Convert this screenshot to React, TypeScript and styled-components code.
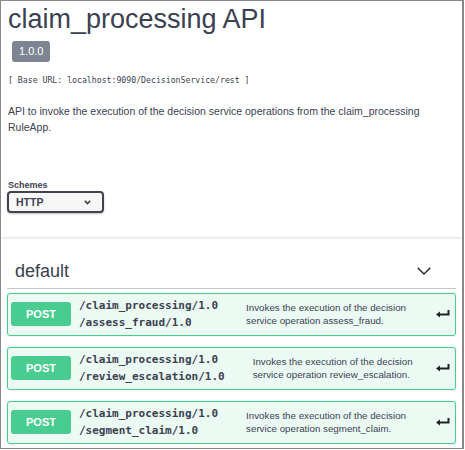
import React from "react";
import styled, { createGlobalStyle } from "styled-components";

const Global = createGlobalStyle`
  html, body { margin: 0; padding: 0; background: #fff; }
  body { font-family: "Liberation Sans", Arial, sans-serif; color: #3b4151; }
`;

const Frame = styled.div`
  width: 464px;
  height: 449px;
  box-sizing: border-box;
  border: 1px solid #888;
  border-right-width: 2px;
  overflow: hidden;
  display: flex;
  flex-direction: column;
`;

const Info = styled.div`
  padding: 0 7px;
`;

const Title = styled.h1`
  margin: 0;
  font-size: 27px;
  font-weight: 400;
  line-height: 36px;
  color: #3b4151;
`;

const Version = styled.span`
  display: inline-block;
  margin: 4px 0 0 4px;
  padding: 0 7px;
  height: 21px;
  line-height: 21px;
  background: #7d8492;
  color: #fff;
  font-size: 11px;
  border-radius: 3px;
`;

const BaseUrl = styled.div`
  margin-top: 12px;
  font-family: "DejaVu Sans Mono", monospace;
  font-size: 8.2px;
  line-height: 12px;
`;

const Description = styled.p`
  margin: 17px 0 0;
  font-size: 10.5px;
  line-height: 16px;
`;

const SchemeContainer = styled.div`
  margin-top: 45px;
  padding: 0 6px 24px;
  box-shadow: 0 1px 2px 0 rgba(0, 0, 0, 0.15);
`;

const Label = styled.div`
  font-size: 9px;
  font-weight: 700;
  line-height: 10px;
  padding-left: 1px;
`;

const Select = styled.div`
  margin-top: 1px;
  width: 97px;
  height: 22px;
  box-sizing: border-box;
  border: 2px solid #41444e;
  border-radius: 4px;
  background: #f7f7f7;
  display: flex;
  align-items: center;
  justify-content: space-between;
  padding: 0 11px 0 7px;
  font-size: 10.5px;
  font-weight: 700;
  box-shadow: 0 1px 2px 0 rgba(0, 0, 0, 0.25);
`;

const Section = styled.div`
  padding: 0 6px;
  margin-top: 17px;
`;

const TagHeader = styled.div`
  display: flex;
  align-items: center;
  justify-content: space-between;
  height: 34px;
  padding: 0 25px 0 8px;
  border-bottom: 1px solid rgba(59, 65, 81, 0.3);
  font-size: 18px;
  margin-bottom: 4px;
`;

const Op = styled.div`
  display: flex;
  align-items: center;
  border: 1px solid #49cc90;
  background: rgba(73, 204, 144, 0.1);
  border-radius: 3px;
  padding: 3.25px 5px 3.25px 3px;
  margin-bottom: 11.5px;
  box-shadow: 0 0 2px rgba(0, 0, 0, 0.19);
`;

const Method = styled.span`
  flex: none;
  width: 60px;
  height: 24px;
  line-height: 24px;
  text-align: center;
  background: #49cc90;
  color: #fff;
  font-size: 11px;
  font-weight: 700;
  border-radius: 3px;
`;

const Path = styled.span`
  flex: none;
  padding: 0 8px;
  font-family: "DejaVu Sans Mono", monospace;
  font-weight: 700;
  font-size: 11px;
  line-height: 17px;
  color: #3b4151;
`;

const OpDesc = styled.span`
  flex: none;
  width: 170px;
  padding-left: 20px;
  font-size: 9.75px;
  line-height: 13.5px;
  color: #3b4151;
`;

const Arrow = styled.span`
  margin-left: auto;
  display: flex;
`;

const Chevron = styled.svg`
  display: block;
`;

const EnterIcon = () => (
  <svg width="14" height="8" viewBox="0 0 14 8">
    <path d="M12.5 0 V4.5 H2" stroke="#222" strokeWidth="2" fill="none" />
    <path d="M0 4.5 L4 1.5 V7.5 Z" fill="#222" />
  </svg>
);

const operations = [
  { path2: "/assess_fraud/1.0", op: "assess_fraud" },
  { path2: "/review_escalation/1.0", op: "review_escalation" },
  { path2: "/segment_claim/1.0", op: "segment_claim" },
];

export default function App() {
  return (
    <>
      <Global />
      <Frame>
        <Info>
          <Title>claim_processing API</Title>
          <Version>1.0.0</Version>
          <BaseUrl>[ Base URL: localhost:9090/DecisionService/rest ]</BaseUrl>
          <Description>
            API to invoke the execution of the decision service operations from the claim_processing
            RuleApp.
          </Description>
        </Info>
        <SchemeContainer>
          <Label>Schemes</Label>
          <Select>
            <span>HTTP</span>
            <Chevron width="7" height="5" viewBox="0 0 7 5">
              <path d="M0.8 0.8 L3.5 3.6 L6.2 0.8" stroke="#3b4151" strokeWidth="1.6" fill="none" />
            </Chevron>
          </Select>
        </SchemeContainer>
        <Section>
          <TagHeader>
            <span>default</span>
            <Chevron width="14" height="8" viewBox="0 0 14 8">
              <path d="M0.7 0.7 L7 7 L13.3 0.7" stroke="#222" strokeWidth="1.3" fill="none" />
            </Chevron>
          </TagHeader>
          {operations.map((o) => (
            <Op key={o.op}>
              <Method>POST</Method>
              <Path>
                /claim_processing/1.0
                <br />
                {o.path2}
              </Path>
              <OpDesc>{`Invokes the execution of the decision service operation ${o.op}.`}</OpDesc>
              <Arrow>
                <EnterIcon />
              </Arrow>
            </Op>
          ))}
        </Section>
      </Frame>
    </>
  );
}
